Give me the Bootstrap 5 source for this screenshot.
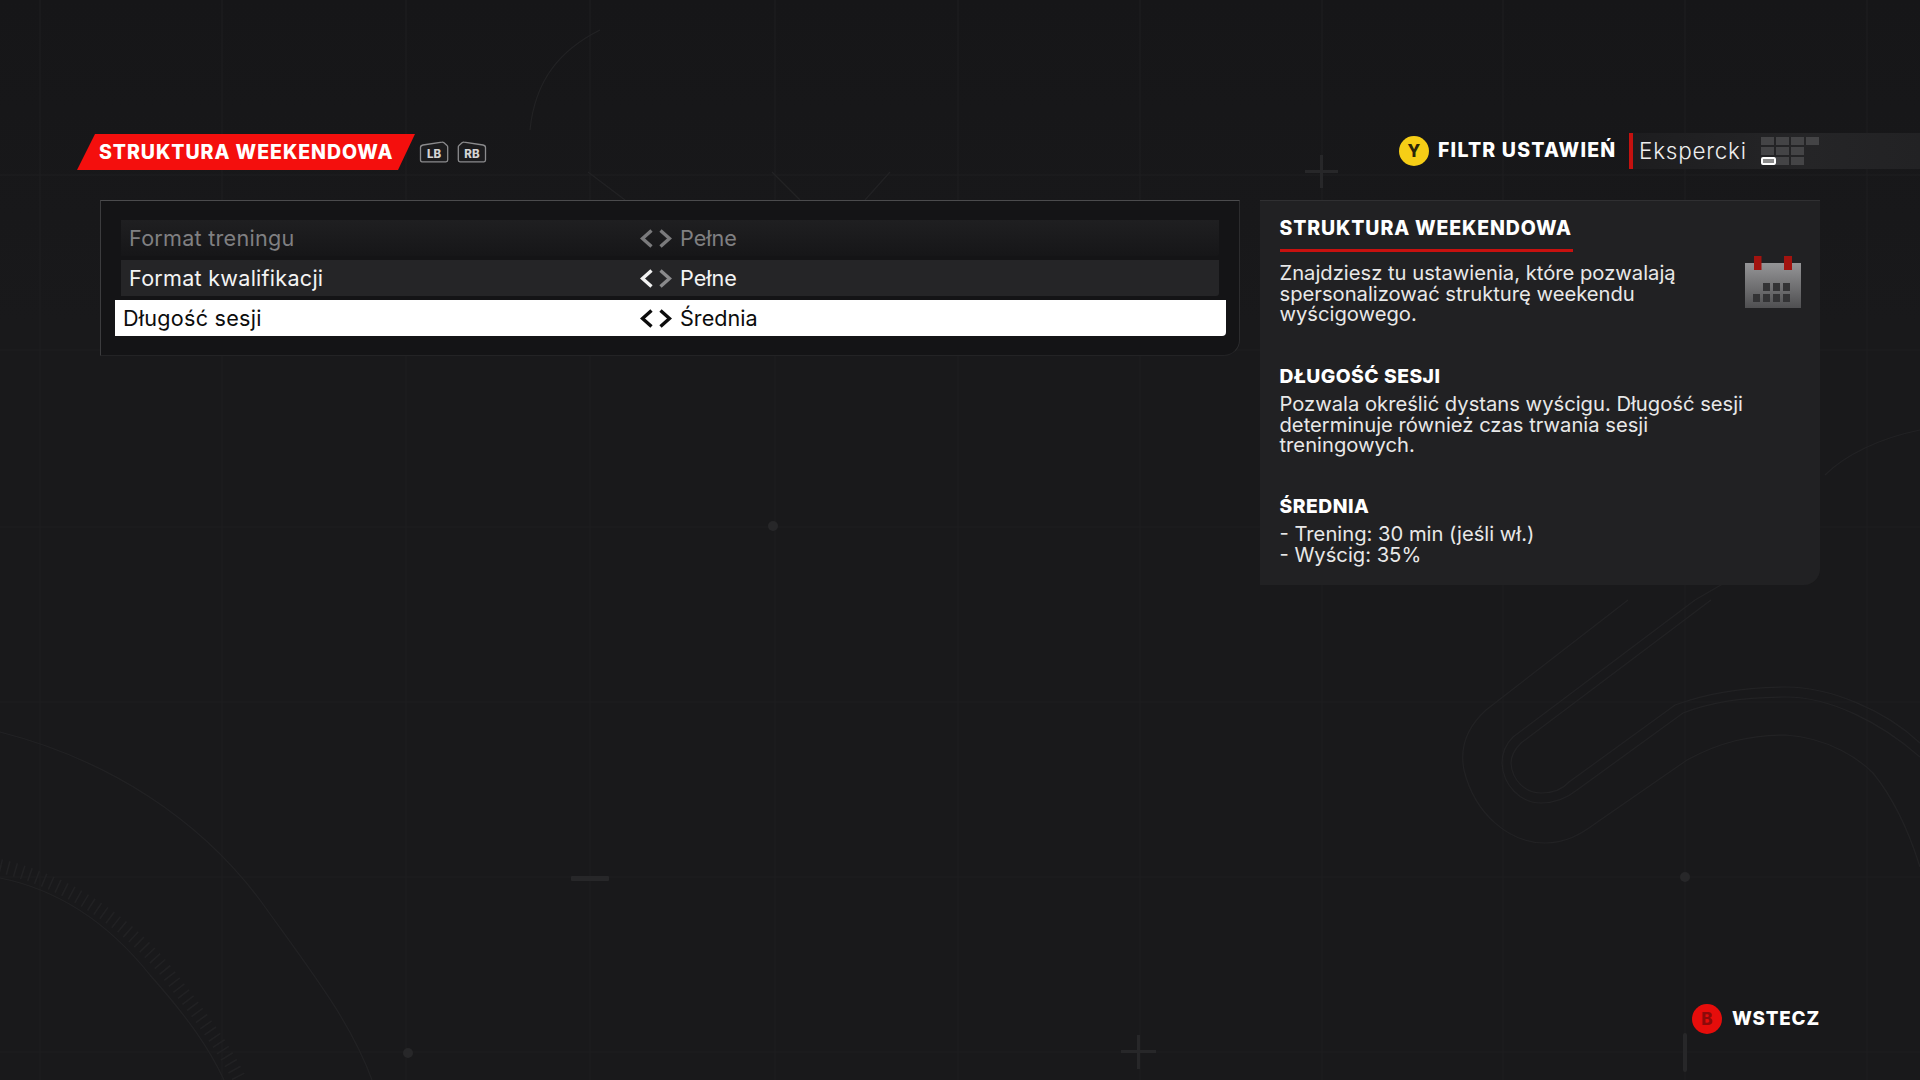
<!DOCTYPE html>
<html lang="pl">
<head>
<meta charset="utf-8">
<title>Struktura weekendowa</title>
<link href="https://cdn.jsdelivr.net/npm/bootstrap@5.3.0/dist/css/bootstrap.min.css" rel="stylesheet">
<style>
html,body{margin:0;height:1080px;background:#19191b;overflow:hidden}
body{font-family:Inter,"Liberation Sans",sans-serif;color:#f1f1f1;background:linear-gradient(180deg,#161618,#19191b 30%)}
.bg-art{position:absolute;inset:0;width:1920px;height:1080px;z-index:0}
.screen{position:relative;z-index:1;height:1080px;padding-top:134px}
.top-bar{height:36px}
.banner{margin-left:77px;width:338px;height:36px;padding-left:22px;background:#f40f0d;clip-path:polygon(18px 0,100% 0,321px 100%,0 100%);color:#fff;font-weight:800;font-size:19.5px;letter-spacing:.95px;line-height:36px;white-space:nowrap}
.bumpers{margin-left:4px;gap:8px;padding-top:7px}
.bumpers svg{display:block}
.bump-text{font:800 11.5px Inter,"Liberation Sans",sans-serif;fill:#d4d4d4;text-anchor:middle}
.filter-side{margin-top:-1px;height:36px}
.round-key{width:30px;height:30px;border-radius:50%;font-weight:800;font-size:17px;line-height:1;flex:none}
.key-y{background:#f6ce16;color:#2a2508}
.filter-label{margin-left:9px;width:191px;font-weight:800;font-size:19.5px;letter-spacing:1.2px;color:#fff;white-space:nowrap}
.filter-strip{width:291px;height:36px;border-left:4px solid #c4110f;background:linear-gradient(90deg,#1d1d1f,#252527 60%,#222224);padding-left:6px}
.filter-value{width:122px;font-size:22.5px;font-weight:300;color:#eee;letter-spacing:.75px}
.level-grid{display:grid;grid-template-columns:repeat(4,13px);grid-auto-rows:8px;gap:2px;row-gap:2px}
.level-cell{background:#444446}
.level-cell.on{background:#8c8c8c;border:2px solid #fff;border-radius:2px;width:15px}
.content-row{margin-top:30px;gap:20px;padding-left:100px;align-items:flex-start}
.options{width:1140px;height:156px;padding:19px 14px 0;background:#141416;border-top:1px solid #4b4b4d;border-left:1px solid #3c3c3e;border-bottom:1px solid #232325;border-right:1px solid #2c2c2e;border-radius:0 0 16px 0}
.opt-row{height:36px;margin:0 6px 4px;font-size:21.6px;padding-left:8px;border-radius:0 0 3px 0}
.opt-row.faded{background:linear-gradient(180deg,#1f1f21,#161618);color:#808082}
.opt-row.plain{background:#252527;color:#f4f4f4}
.opt-row.active{background:#fff;color:#0c0c0c;margin:0;padding-left:8px;border-radius:0 0 4px 0;width:1111px}
.opt-label{width:511px;flex:none;letter-spacing:.25px}
.active .opt-label{width:517px}
.opt-arrows{width:40px;flex:none;gap:6px}
.opt-arrows svg{display:block}
.info{width:560px;height:385px;padding:0 19px 0 19.5px;background:#212123;border-radius:0 0 16px 0;border-top:1px solid #303032}
.info-title{margin:0;padding-top:15px;height:51px;font-size:19.5px;line-height:24px;font-weight:800;color:#fff;letter-spacing:.85px;border-bottom:3px solid #c8110f;width:293px;white-space:nowrap}
.info-text{font-size:20.2px;line-height:20.7px;color:#e8e8e8;margin:0;font-weight:400;max-width:470px}
.intro-row{margin-top:11px;height:100px}
.intro-row .info-text{width:440px}
.cal{margin-left:25px;margin-top:-7px;flex:none}
.info-head{margin:0;font-size:19.3px;line-height:24px;font-weight:800;color:#fff;letter-spacing:.5px}
.head-a{margin-top:1px}
.head-b{margin-top:38px}
.under-head{margin-top:6px}
.foot{margin-top:auto;padding:0 100px 46px 0}
.key-b{background:#e60d0b;color:#8c0a0a}
.back-label{margin-left:10px;font-weight:800;font-size:18.8px;color:#fff;letter-spacing:.85px}
</style>
</head>
<body>
<svg class="bg-art" viewBox="0 0 1920 1080" fill="none" aria-hidden="true">
  <g stroke="#1f1f21" stroke-width="1">
    <path d="M40 0V1080M222 0V1080M406 0V1080M590 0V1080M775 0V1080M958 0V1080M1140 0V1080M1322 0V1080M1503 0V1080M1685 0V1080M1867 0V1080"/>
    <path d="M0 175H1920M0 350H1920M0 527H1920M0 702H1920M0 877H1920M0 1052H1920"/>
  </g>
  <g stroke="#222224" stroke-width="1.2">
    <path d="M0 732C110 760 200 820 260 900C310 970 350 1020 372 1080"/>
    <path d="M0 878C60 890 110 925 150 975C190 1020 210 1050 224 1080"/>
    <path d="M1628 600L1486 710C1464 730 1460 750 1464 770C1475 815 1510 843 1545 843C1565 843 1580 835 1596 823L1687 760C1720 742 1750 735 1786 735C1830 738 1860 760 1873 773C1895 800 1910 835 1920 867"/>
    <path d="M1695 600L1513 737C1505 745 1502 755 1502 763C1503 785 1520 803 1541 803C1555 803 1567 798 1577 790L1683 713C1715 700 1750 697 1786 697C1830 697 1880 722 1920 757"/>
    <path d="M1711 600L1521 743C1514 750 1511 757 1511 763C1512 780 1525 793 1541 793C1552 793 1562 790 1569 782L1675 705C1710 692 1750 687 1786 687C1830 687 1885 710 1920 743"/>
    <path d="M1920 430C1880 438 1845 455 1825 475M1726 582L1695 600"/>
    <path d="M588 172L625 200M772 172L800 200M890 172L865 200M530 130C535 80 560 50 600 30"/>
  </g>
  <path d="M0 866C60 880 120 915 165 970C200 1015 225 1050 240 1080" stroke="#212123" stroke-width="14" stroke-dasharray="1.6 6"/>
  <g fill="#272729">
    <circle cx="773" cy="526" r="5"/><circle cx="1685" cy="877" r="5"/><circle cx="408" cy="1053" r="5"/>
    <rect x="571" y="876" width="38" height="5" rx="1"/>
    <rect x="1683" y="1033" width="4" height="39" rx="2"/>
    <path d="M1320 155h3v15h15v3h-15v15h-3v-15h-15v-3h15zM1137 1035h3v15h16v3h-16v16h-3v-16h-16v-3h16z"/>
  </g>
</svg>

<div class="screen d-flex flex-column">
  <div class="top-bar d-flex justify-content-between align-items-start">
    <div class="d-flex">
      <div class="banner">STRUKTURA WEEKENDOWA</div>
      <div class="bumpers d-flex">
        <svg width="30" height="22" viewBox="0 0 30 22"><path d="M1.5 6.5Q1.5 4.500 4 4L23 1.200Q24 1 25 1.800L28 4.500Q28.700 5 28.700 6V19Q28.700 20.800 27 20.800H3Q1.500 20.800 1.500 19Z" stroke="#8b8b8d" stroke-width="1.300" fill="#1c1c1e"/><text class="bump-text" x="15" y="16.500">LB</text></svg>
        <svg width="30" height="22" viewBox="0 0 30 22"><path d="M28.500 6.500Q28.500 4.500 26 4L7 1.200Q6 1 5 1.800L2 4.500Q1.300 5 1.300 6V19Q1.300 20.800 3 20.800H27Q28.500 20.800 28.500 19Z" stroke="#8b8b8d" stroke-width="1.300" fill="#1c1c1e"/><text class="bump-text" x="15" y="16.500">RB</text></svg>
      </div>
    </div>
    <div class="filter-side d-flex align-items-center">
      <div class="round-key key-y d-flex align-items-center justify-content-center">Y</div>
      <div class="filter-label">FILTR USTAWIEŃ</div>
      <div class="filter-strip d-flex align-items-center">
        <div class="filter-value">Ekspercki</div>
        <div class="level-grid">
          <span class="level-cell"></span><span class="level-cell"></span><span class="level-cell"></span><span class="level-cell"></span>
          <span class="level-cell"></span><span class="level-cell"></span><span class="level-cell"></span><span></span>
          <span class="level-cell on"></span><span class="level-cell"></span><span class="level-cell"></span><span></span>
        </div>
      </div>
    </div>
  </div>

  <div class="content-row d-flex">
    <div class="options">
      <div class="opt-row faded d-flex align-items-center">
        <div class="opt-label">Format treningu</div>
        <div class="opt-arrows d-flex align-items-center">
          <svg width="13" height="19" viewBox="0 0 13 19" fill="none"><path d="M11.500 1.500L2.500 9.500L11.500 17.500" stroke="#7a7a7c" stroke-width="3.400"/></svg>
          <svg width="13" height="19" viewBox="0 0 13 19" fill="none"><path d="M1.500 1.500L10.500 9.500L1.500 17.500" stroke="#7a7a7c" stroke-width="3.400"/></svg>
        </div>
        <div>Pełne</div>
      </div>
      <div class="opt-row plain d-flex align-items-center">
        <div class="opt-label">Format kwalifikacji</div>
        <div class="opt-arrows d-flex align-items-center">
          <svg width="13" height="19" viewBox="0 0 13 19" fill="none"><path d="M11.500 1.500L2.500 9.500L11.500 17.500" stroke="#f2f2f2" stroke-width="3.400"/></svg>
          <svg width="13" height="19" viewBox="0 0 13 19" fill="none"><path d="M1.500 1.500L10.500 9.500L1.500 17.500" stroke="#8a8a8c" stroke-width="3.400"/></svg>
        </div>
        <div>Pełne</div>
      </div>
      <div class="opt-row active d-flex align-items-center">
        <div class="opt-label">Długość sesji</div>
        <div class="opt-arrows d-flex align-items-center">
          <svg width="13" height="19" viewBox="0 0 13 19" fill="none"><path d="M11.500 1.500L2.500 9.500L11.500 17.500" stroke="#0c0c0c" stroke-width="3.400"/></svg>
          <svg width="13" height="19" viewBox="0 0 13 19" fill="none"><path d="M1.500 1.500L10.500 9.500L1.500 17.500" stroke="#0c0c0c" stroke-width="3.400"/></svg>
        </div>
        <div>Średnia</div>
      </div>
    </div>

    <div class="info">
      <h2 class="info-title">STRUKTURA WEEKENDOWA</h2>
      <div class="intro-row d-flex">
        <p class="info-text">Znajdziesz tu ustawienia, które pozwalają spersonalizować strukturę weekendu wyścigowego.</p>
        <svg class="cal" width="56" height="52" viewBox="0 0 56 52">
          <defs><linearGradient id="calg" x1="0" y1="0" x2="0" y2="1"><stop offset="0" stop-color="#959597"/><stop offset="1" stop-color="#4f4f51"/></linearGradient></defs>
          <rect x="0" y="7" width="56" height="45" fill="url(#calg)"/>
          <rect x="9" y="0" width="7.500" height="14" fill="#a3130f"/><rect x="39" y="0" width="8" height="14" fill="#a3130f"/>
          <g fill="#333335">
            <rect x="18" y="27" width="7" height="8"/><rect x="28" y="27" width="7" height="8"/><rect x="38" y="27" width="7" height="8"/>
            <rect x="8" y="38" width="7" height="8"/><rect x="18" y="38" width="7" height="8"/><rect x="28" y="38" width="7" height="8"/><rect x="38" y="38" width="7" height="8"/>
          </g>
        </svg>
      </div>
      <h3 class="info-head head-a">DŁUGOŚĆ SESJI</h3>
      <p class="info-text under-head">Pozwala określić dystans wyścigu. Długość sesji determinuje również czas trwania sesji treningowych.</p>
      <h3 class="info-head head-b">ŚREDNIA</h3>
      <p class="info-text under-head">- Trening: 30 min (jeśli wł.)<br>- Wyścig: 35%</p>
    </div>
  </div>

  <div class="foot d-flex justify-content-end align-items-center">
    <div class="round-key key-b d-flex align-items-center justify-content-center">B</div>
    <div class="back-label">WSTECZ</div>
  </div>
</div>
<script src="https://cdn.jsdelivr.net/npm/bootstrap@5.3.0/dist/js/bootstrap.bundle.min.js"></script>
</body>
</html>
